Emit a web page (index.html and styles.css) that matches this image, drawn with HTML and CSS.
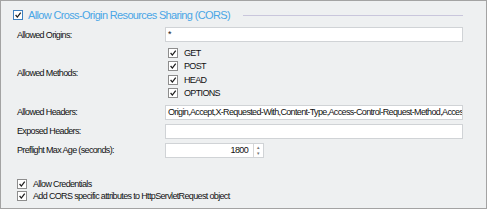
FILE: index.html
```html
<!DOCTYPE html>
<html>
<head>
    <title>CORS Settings</title>
    <link rel="stylesheet" href="styles.css">
</head>
<body>
    <div class="panel">
        <div class="head">
            <span class="box box-focus"><svg viewBox="0 0 10 10"><path d="M2 5 L4.2 7.6 L8.4 2"/></svg></span>
            <span class="title">Allow Cross-Origin Resources Sharing (CORS)</span>
            <span class="rule"></span>
        </div>

        <div class="form">
            <div class="lbl">Allowed Origins:</div>
            <div class="field">*</div>

            <div class="lbl">Allowed Methods:</div>
            <div class="methods">
                <div class="check"><span class="box"><svg viewBox="0 0 10 10"><path d="M2 5 L4.2 7.6 L8.4 2"/></svg></span>GET</div>
                <div class="check"><span class="box"><svg viewBox="0 0 10 10"><path d="M2 5 L4.2 7.6 L8.4 2"/></svg></span>POST</div>
                <div class="check"><span class="box"><svg viewBox="0 0 10 10"><path d="M2 5 L4.2 7.6 L8.4 2"/></svg></span>HEAD</div>
                <div class="check"><span class="box"><svg viewBox="0 0 10 10"><path d="M2 5 L4.2 7.6 L8.4 2"/></svg></span>OPTIONS</div>
            </div>

            <div class="lbl">Allowed Headers:</div>
            <div class="field">Origin,Accept,X-Requested-With,Content-Type,Access-Control-Request-Method,Access-Control-Request-Headers</div>

            <div class="lbl">Exposed Headers:</div>
            <div class="field"></div>

            <div class="lbl">Preflight Max Age (seconds):</div>
            <div class="spin">
                <div class="spin-val">1800</div>
                <div class="spin-btns">
                    <span class="arr">&#9652;</span>
                    <span class="arr">&#9662;</span>
                </div>
            </div>
        </div>

        <div class="opts">
            <div class="check"><span class="box"><svg viewBox="0 0 10 10"><path d="M2 5 L4.2 7.6 L8.4 2"/></svg></span>Allow Credentials</div>
            <div class="check"><span class="box"><svg viewBox="0 0 10 10"><path d="M2 5 L4.2 7.6 L8.4 2"/></svg></span>Add CORS specific attributes to HttpServletRequest object</div>
        </div>
    </div>
</body>
</html>
```

FILE: styles.css
```css
body { margin: 0; background: #eef0f1; font-family: "Liberation Sans", Arial, sans-serif; font-size: 9px; letter-spacing: -0.65px; color: #111; }
.panel { box-sizing: border-box; width: 487px; height: 209px; border: 1px solid #a3a3a3; padding: 8px 0 0 12px; }

.head { display: flex; align-items: center; height: 12px; }
.title { color: #4aa6e6; font-size: 11px; letter-spacing: -0.65px; margin-left: 5px; white-space: nowrap; }
.rule { flex: 0 0 220px; height: 1px; background: #c9c6dc; margin-left: 13px; }

.box { box-sizing: border-box; width: 10px; height: 10px; border: 1px solid #8d8d8d; background: #fff; display: inline-block; flex: none; }
.box svg { display: block; width: 8px; height: 8px; fill: none; stroke: #202020; stroke-width: 1.6; }
.box-focus { border-color: #3d7fbf; }

.form { display: grid; grid-template-columns: 148px 298px; row-gap: 4px; align-items: center; margin: 6px 0 0 4px; }
.field { box-sizing: border-box; height: 15px; background: #fff; border: 1px solid #d0d3d6; padding: 0 2px; line-height: 13px; white-space: nowrap; overflow: hidden; }

.methods { display: flex; flex-direction: column; gap: 3.3px; margin: 2px 0 3px 3px; }
.check { display: flex; align-items: center; gap: 6px; height: 10px; }

.spin { display: flex; width: 99px; height: 15px; box-sizing: border-box; background: #fff; border: 1px solid #d0d3d6; }
.spin-val { flex: 1; text-align: right; line-height: 13px; padding-right: 5px; }
.spin-btns { width: 9px; display: flex; flex-direction: column; border-left: 1px solid #d6d6d6; }
.arr { flex: 1; font-size: 5px; line-height: 6px; text-align: center; color: #777; }

.opts { display: flex; flex-direction: column; gap: 2.5px; margin: 21px 0 0 4px; }
```
